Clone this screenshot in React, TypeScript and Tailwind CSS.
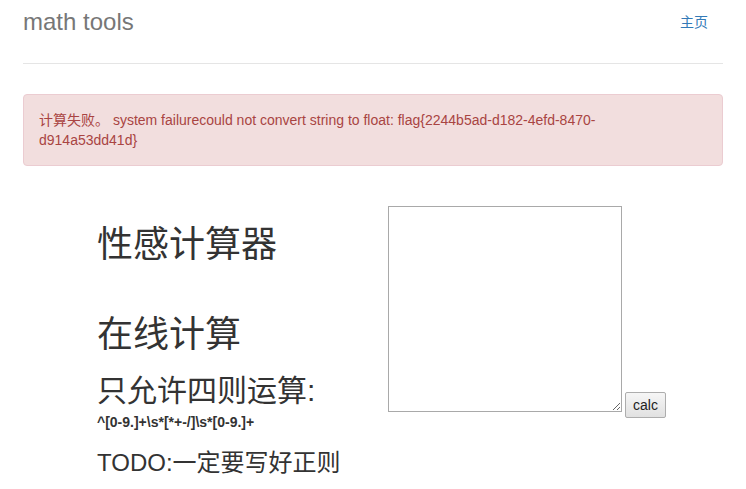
import React from 'react';

const font = { fontFamily: '"Liberation Sans", "Noto Sans CJK SC", sans-serif' };

export default function App() {
  return (
    <div className="min-h-[489px] bg-white text-[#333] text-[14px] px-[23px]" style={font}>
      <header className="flex items-start justify-between pt-[2px] pb-[21px] border-b border-[#e5e5e5]">
        <h3 className="text-[24px] leading-[40px] text-[#777] font-normal">math tools</h3>
        <nav>
          <a href="#" className="block px-[15px] py-[10px] leading-[20px] text-[#337ab7] text-[14px]">主页</a>
        </nav>
      </header>

      <div className="mt-[30px] mb-[20px] rounded-[4px] border border-[#ebccd1] bg-[#f2dede] p-[15px] text-[#a94442] leading-[20px]">
        计算失败。 system failurecould not convert string to float: flag{'{'}2244b5ad-d182-4efd-8470-
        <br />
        d914a53dd41d{'}'}
      </div>

      <div className="flex pl-[74px]">
        <div className="w-[291px] shrink-0">
          <h1 className="mt-[39px] text-[36px] leading-[40px] font-normal">性感计算器</h1>
          <h1 className="mt-[50px] text-[36px] leading-[40px] font-normal">在线计算</h1>
          <h2 className="mt-[19px] text-[30px] leading-[34px] font-normal">只允许四则运算:</h2>
          <p className="mt-[6px] text-[14px] leading-[16px] font-bold">^[0-9.]+\s*[*+-/]\s*[0-9.]+</p>
          <h3 className="mt-[19px] text-[24px] leading-[28px] font-normal">TODO:一定要写好正则</h3>
        </div>
        <form className="flex items-end gap-[3px] mt-[20px] self-start">
          <textarea className="w-[234px] h-[206px] border border-[#a9a9a9] bg-white mb-[8px] p-[2px] text-[13px]" />
          <button
            type="button"
            className="w-[41px] h-[26px] mb-[2px] border border-[#adadad] rounded-[2px] bg-gradient-to-b from-[#f6f6f6] to-[#e1e1e1] text-[14px] text-[#222] leading-[20px]"
          >
            calc
          </button>
        </form>
      </div>
    </div>
  );
}
